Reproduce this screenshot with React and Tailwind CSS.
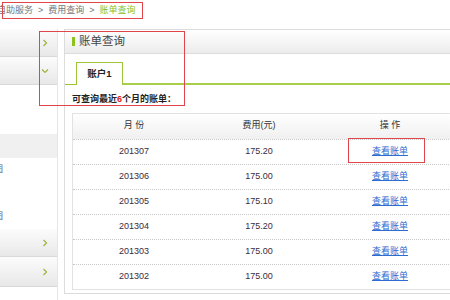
import React from "react";

const rows = [
  { month: "201307", fee: "175.20" },
  { month: "201306", fee: "175.00" },
  { month: "201305", fee: "175.10" },
  { month: "201304", fee: "175.20" },
  { month: "201303", fee: "175.00" },
  { month: "201302", fee: "175.00" },
];

const Chevron = ({ down }) => (
  <svg width="8" height="8" viewBox="0 0 8 8" className="text-[#9fb33d]">
    {down ? (
      <polyline points="1,2.5 4,5.5 7,2.5" fill="none" stroke="currentColor" strokeWidth="1.2" />
    ) : (
      <polyline points="2.5,1 5.5,4 2.5,7" fill="none" stroke="currentColor" strokeWidth="1.2" />
    )}
  </svg>
);

const SideRow = ({ down, h = "h-[28px]" }) => (
  <div className={`${h} flex items-center justify-end pr-[8px] bg-gradient-to-b from-[#fcfcfc] to-[#e8e8e8] border-b border-[#d9d9d9]`}>
    <Chevron down={down} />
  </div>
);

const App = () => {
  return (
    <div
      className="relative w-[450px] h-[300px] overflow-hidden bg-white text-[#333]"
      style={{ fontFamily: '"Liberation Sans", "Noto Sans CJK SC", sans-serif' }}
    >
      {/* breadcrumb */}
      <div className="h-[22px] flex items-center text-[9px] text-[#777] ml-[-3px] gap-[5px]">
        <span>自助服务</span>
        <span>&gt;</span>
        <span>费用查询</span>
        <span>&gt;</span>
        <span className="text-[#8dc21f]">账单查询</span>
      </div>

      <div className="flex mt-[7px]">
        {/* sidebar */}
        <div className="w-[58px] h-[280px] shrink-0 border-r border-[#e6e6e6] flex flex-col">
          <SideRow h="h-[28px]" />
          <SideRow down h="h-[28px]" />
          <div className="h-[49px]" />
          <div className="h-[24px] bg-[#f0f0f0]" />
          <div className="h-[24px] flex items-center text-[9px] text-[#555] ml-[-6px]">图</div>
          <div className="h-[23px]" />
          <div className="h-[24px] flex items-center text-[9px] text-[#555] ml-[-6px]">图</div>
          <SideRow h="h-[28px]" />
          <SideRow h="h-[30px]" />
        </div>

        {/* main panel */}
        <div className="ml-[6px] w-[420px] shrink-0 h-[265px] border border-[#dcdcdc] flex flex-col">
          <div className="h-[24px] shrink-0 flex items-center pl-[7px] bg-gradient-to-b from-white to-[#ececec] border-b border-[#dcdcdc]">
            <div className="w-[3px] h-[9px] bg-[#8dc21f]" />
            <span className="ml-[4px] text-[11.5px] text-[#444]">账单查询</span>
          </div>

          <div className="mt-[8px] flex items-end">
            <div className="w-[11px] border-b border-[#9cc53a]" />
            <div className="w-[47px] h-[23px] border-t border-l border-r border-[#9cc53a] flex items-center justify-center text-[9.5px] font-bold text-[#222]">
              账户1
            </div>
            <div className="flex-1 border-b-2 border-[#a9cf4a]" />
          </div>

          <div className="pl-[7px] mt-[8px] text-[9px] font-bold text-[#222]">
            可查询最近<span className="text-[#e02020]">6</span>个月的账单：
          </div>

          <div className="ml-[7px] mt-[6px] w-[400px] border border-[#e2e2e2] text-[9px]">
            <div className="grid grid-cols-[122px_128px_150px] h-[25px] items-center bg-gradient-to-b from-white to-[#f0f0f0] text-[#333]">
              <div className="text-center">月&nbsp;份</div>
              <div className="text-center">费用(元)</div>
              <div className="text-center pr-[16px]">操&nbsp;作</div>
            </div>
            {rows.map((r, i) => (
              <div
                key={i}
                className="grid grid-cols-[122px_128px_150px] h-[25px] items-center border-t border-dotted border-[#c8c8c8] text-[#3b2b3b]"
              >
                <div className="text-center">{r.month}</div>
                <div className="text-center">{r.fee}</div>
                <div className="text-center pr-[16px]">
                  <span className="text-[#2f6bd0] underline">查看账单</span>
                </div>
              </div>
            ))}
          </div>
        </div>
      </div>

      {/* annotation boxes */}
      <div className="absolute left-[2px] top-[2px] w-[141px] h-[17px] border-[1.5px] border-[#e0454a]" />
      <div className="absolute left-[39px] top-[31px] w-[146px] h-[75px] border-[1.5px] border-[#e0454a]" />
      <div className="absolute left-[348px] top-[138px] w-[77px] h-[25px] border-[1.5px] border-[#e0454a]" />
    </div>
  );
};

export default App;
